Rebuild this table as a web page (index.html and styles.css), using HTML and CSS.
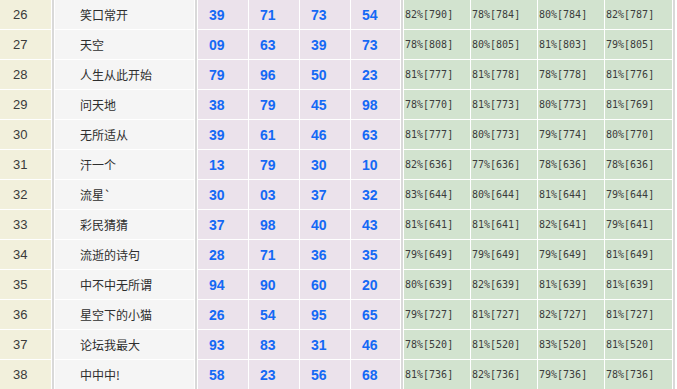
FILE: index.html
```html
<!DOCTYPE html>
<html lang="zh">
<head>
<meta charset="utf-8">
<title>统计</title>
<link rel="stylesheet" href="styles.css">
</head>
<body>
<div class="board">
  <div class="sep sep-a"></div>
  <div class="sep sep-b"></div>
  <div class="sep sep-c"></div>
  <div class="sep sep-d"></div>

  <div class="no">26</div><div class="name">笑口常开</div>
  <div class="num">39</div><div class="num">71</div><div class="num">73</div><div class="num">54</div>
  <div class="rate">82%[790]</div><div class="rate">78%[784]</div><div class="rate">80%[784]</div><div class="rate">82%[787]</div>

  <div class="no">27</div><div class="name">天空</div>
  <div class="num">09</div><div class="num">63</div><div class="num">39</div><div class="num">73</div>
  <div class="rate">78%[808]</div><div class="rate">80%[805]</div><div class="rate">81%[803]</div><div class="rate">79%[805]</div>

  <div class="no">28</div><div class="name">人生从此开始</div>
  <div class="num">79</div><div class="num">96</div><div class="num">50</div><div class="num">23</div>
  <div class="rate">81%[777]</div><div class="rate">81%[778]</div><div class="rate">78%[778]</div><div class="rate">81%[776]</div>

  <div class="no">29</div><div class="name">问天地</div>
  <div class="num">38</div><div class="num">79</div><div class="num">45</div><div class="num">98</div>
  <div class="rate">78%[770]</div><div class="rate">81%[773]</div><div class="rate">80%[773]</div><div class="rate">81%[769]</div>

  <div class="no">30</div><div class="name">无所适从</div>
  <div class="num">39</div><div class="num">61</div><div class="num">46</div><div class="num">63</div>
  <div class="rate">81%[777]</div><div class="rate">80%[773]</div><div class="rate">79%[774]</div><div class="rate">80%[770]</div>

  <div class="no">31</div><div class="name">汗一个</div>
  <div class="num">13</div><div class="num">79</div><div class="num">30</div><div class="num">10</div>
  <div class="rate">82%[636]</div><div class="rate">77%[636]</div><div class="rate">78%[636]</div><div class="rate">78%[636]</div>

  <div class="no">32</div><div class="name">流星`</div>
  <div class="num">30</div><div class="num">03</div><div class="num">37</div><div class="num">32</div>
  <div class="rate">83%[644]</div><div class="rate">80%[644]</div><div class="rate">81%[644]</div><div class="rate">79%[644]</div>

  <div class="no">33</div><div class="name">彩民猜猜</div>
  <div class="num">37</div><div class="num">98</div><div class="num">40</div><div class="num">43</div>
  <div class="rate">81%[641]</div><div class="rate">81%[641]</div><div class="rate">82%[641]</div><div class="rate">79%[641]</div>

  <div class="no">34</div><div class="name">流逝的诗句</div>
  <div class="num">28</div><div class="num">71</div><div class="num">36</div><div class="num">35</div>
  <div class="rate">79%[649]</div><div class="rate">79%[649]</div><div class="rate">79%[649]</div><div class="rate">81%[649]</div>

  <div class="no">35</div><div class="name">中不中无所谓</div>
  <div class="num">94</div><div class="num">90</div><div class="num">60</div><div class="num">20</div>
  <div class="rate">80%[639]</div><div class="rate">82%[639]</div><div class="rate">81%[639]</div><div class="rate">81%[639]</div>

  <div class="no">36</div><div class="name">星空下的小猫</div>
  <div class="num">26</div><div class="num">54</div><div class="num">95</div><div class="num">65</div>
  <div class="rate">79%[727]</div><div class="rate">81%[727]</div><div class="rate">82%[727]</div><div class="rate">81%[727]</div>

  <div class="no">37</div><div class="name">论坛我最大</div>
  <div class="num">93</div><div class="num">83</div><div class="num">31</div><div class="num">46</div>
  <div class="rate">78%[520]</div><div class="rate">81%[520]</div><div class="rate">83%[520]</div><div class="rate">81%[520]</div>

  <div class="no">38</div><div class="name">中中中!</div>
  <div class="num">58</div><div class="num">23</div><div class="num">56</div><div class="num">68</div>
  <div class="rate">81%[736]</div><div class="rate">82%[736]</div><div class="rate">79%[736]</div><div class="rate">78%[736]</div>
</div>
</body>
</html>
```
FILE: styles.css
```css
html, body {
  margin: 0;
  padding: 0;
  background: #ffffff;
  overflow: hidden;
}

.board {
  display: grid;
  grid-template-columns: 51px 2px 139px 2px 50px 50px 50px 49px 2px 66px 66px 66px 67px 2px;
  grid-template-rows: repeat(13, 29px);
  gap: 1px;
  background: #ffffff;
}

.sep {
  background: #d9d9d9;
  grid-row: 1 / -1;
}
.sep-a { grid-column: 2; }
.sep-b { grid-column: 4; }
.sep-c { grid-column: 9; }
.sep-d { grid-column: 14; }

.no, .name, .num, .rate {
  display: flex;
  align-items: center;
  white-space: nowrap;
  overflow: hidden;
}

.no {
  background: #f2f0dc;
  padding-left: 13px;
  font-family: "Liberation Sans", Arial, sans-serif;
  font-size: 13px;
  color: #3a3a3a;
}

.name {
  background: #f5f5f5;
  padding-left: 25px;
  font-family: "Noto Sans CJK SC", "Liberation Sans", sans-serif;
  font-size: 12px;
  color: #2e2e2e;
}

.num {
  background: #ebe2eb;
  padding-left: 11px;
  font-family: "Liberation Sans", Arial, sans-serif;
  font-weight: bold;
  font-size: 14px;
  color: #1469f5;
}

.rate {
  background: #d2e3cf;
  padding-left: 1px;
  font-family: "DejaVu Sans Mono", "Liberation Mono", monospace;
  font-size: 10px;
  color: #3c3c3c;
}
```
